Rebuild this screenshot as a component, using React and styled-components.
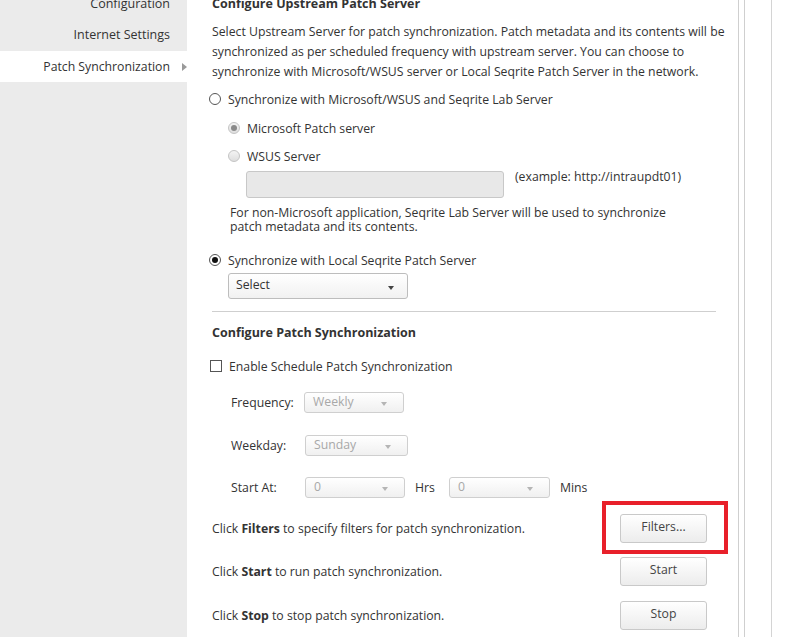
import React from 'react';
import styled, { createGlobalStyle } from 'styled-components';

const GlobalStyle = createGlobalStyle`
    html, body {
        margin: 0;
        padding: 0;
        background: #ffffff;
    }
    body {
        font-family: "Open Sans", "Liberation Sans", sans-serif;
        font-size: 12.25px;
        color: #333333;
    }
`;

const Page = styled.div`
    display: flex;
    width: 794px;
    height: 637px;
    overflow: hidden;
`;

const Sidebar = styled.div`
    width: 187px;
    flex-shrink: 0;
    background: #ebebeb;
    display: flex;
    flex-direction: column;
`;

const NavList = styled.div`
    display: flex;
    flex-direction: column;
    margin-top: -12px;
`;

const NavItem = styled.div`
    height: 31px;
    display: flex;
    align-items: center;
    justify-content: flex-end;
    padding-right: ${(p) => (p.$active ? '0' : '17px')};
    background: ${(p) => (p.$active ? '#ffffff' : 'transparent')};
    color: #333;
    font-size: ${(p) => (p.$active ? '12.25px' : '12.5px')};
    margin-top: ${(p) => (p.$active ? '1px' : '0')};
`;

const NavArrow = styled.span`
    width: 0;
    height: 0;
    border-top: 4px solid transparent;
    border-bottom: 4px solid transparent;
    border-left: 5px solid #9a9a9a;
    margin-left: 12px;
    margin-right: 0;
`;

const Main = styled.div`
    width: 552px;
    flex-shrink: 0;
    padding-left: 25px;
    box-sizing: border-box;
    border-right: 1px solid #cfcfcf;
    display: flex;
    flex-direction: column;
`;

const Gutter = styled.div`
    width: 5px;
    flex-shrink: 0;
    border-right: 1px solid #cfcfcf;
`;

const Column = styled.div`
    width: 26px;
    flex-shrink: 0;
    border-right: 1px solid #d4d4d4;
`;

const Heading = styled.div`
    font-weight: 700;
    font-size: 12.5px;
    line-height: 20px;
    height: 20px;
    margin-top: ${(p) => p.$mt}px;
    color: #333;
    white-space: nowrap;
`;

const Para = styled.div`
    line-height: ${(p) => p.$lh || 20}px;
    margin-top: ${(p) => p.$mt}px;
    margin-left: ${(p) => p.$ml || 0}px;
    width: ${(p) => p.$w || 520}px;
`;

const OptionRow = styled.label`
    display: flex;
    align-items: center;
    height: 20px;
    margin-top: ${(p) => p.$mt}px;
    margin-left: ${(p) => p.$ml}px;
    gap: ${(p) => p.$gap || 7}px;
    white-space: nowrap;
`;

const Radio = styled.span`
    width: 12px;
    height: 12px;
    box-sizing: border-box;
    border-radius: 50%;
    flex-shrink: 0;
    display: flex;
    align-items: center;
    justify-content: center;
    border: 1px solid ${(p) => (p.$disabled ? '#c4c4c4' : '#555555')};
    background: ${(p) => (p.$disabled ? 'linear-gradient(#f4f4f4, #dedede)' : '#ffffff')};

    &::after {
        content: '';
        display: ${(p) => (p.$checked ? 'block' : 'none')};
        width: 6px;
        height: 6px;
        border-radius: 50%;
        background: ${(p) => (p.$disabled ? '#8a8a8a' : '#111111')};
    }
`;

const Checkbox = styled.span`
    width: 12px;
    height: 12px;
    box-sizing: border-box;
    border: 1px solid #555555;
    background: #fff;
    flex-shrink: 0;
`;

const InputRow = styled.div`
    display: flex;
    align-items: flex-start;
    margin-top: ${(p) => p.$mt}px;
    margin-left: 34px;
    gap: 11px;
`;

const TextBox = styled.div`
    width: 258px;
    height: 27px;
    box-sizing: border-box;
    border: 1px solid #c8c8c8;
    border-radius: 3px;
    background: #e8e8e8;
`;

const Hint = styled.span`
    line-height: 14px;
    margin-top: -1px;
    white-space: nowrap;
`;

const SelectBox = styled.div`
    width: ${(p) => p.$w}px;
    height: ${(p) => p.$h || 21}px;
    box-sizing: border-box;
    border: 1px solid ${(p) => (p.$disabled ? '#cfcfcf' : '#bdbdbd')};
    border-radius: 3px;
    background: ${(p) => (p.$disabled ? 'linear-gradient(#ffffff, #f0f0f0)' : 'linear-gradient(#ffffff, #f1f1f1)')};
    display: flex;
    align-items: center;
    justify-content: space-between;
    padding: 0 ${(p) => (p.$disabled ? 16 : 13)}px 3px ${(p) => (p.$disabled ? 8 : 7)}px;
    color: ${(p) => (p.$disabled ? '#a8a8a8' : '#333333')};
    margin-top: ${(p) => p.$mt || 0}px;
    margin-left: ${(p) => p.$ml || 0}px;
    flex-shrink: 0;

    &::after {
        content: '';
        width: 0;
        height: 0;
        border-left: 3.5px solid transparent;
        border-right: 3.5px solid transparent;
        border-top: 4px solid ${(p) => (p.$disabled ? '#b5b5b5' : '#444444')};
        margin-top: 6px;
    }
`;

const Divider = styled.div`
    width: 504px;
    height: 1px;
    background: #cfcfcf;
    margin-top: ${(p) => p.$mt}px;
`;

const FieldRow = styled.div`
    display: flex;
    align-items: center;
    height: 21px;
    margin-top: ${(p) => p.$mt}px;
    margin-left: 19px;
    white-space: nowrap;
`;

const FieldLabel = styled.span`
    width: ${(p) => p.$w}px;
    flex-shrink: 0;
`;

const Unit = styled.span`
    margin-left: ${(p) => p.$ml}px;
    width: ${(p) => p.$w || 'auto'}px;
`;

const ActionRow = styled.div`
    display: flex;
    align-items: center;
    justify-content: space-between;
    width: 495px;
    height: 28px;
    margin-top: ${(p) => p.$mt}px;
    white-space: nowrap;
`;

const ButtonWrap = styled.div`
    position: relative;
`;

const Button = styled.div`
    width: 87px;
    height: 29px;
    box-sizing: border-box;
    border: 1px solid #c9c9c9;
    border-radius: 3px;
    background: linear-gradient(#ffffff, #ececec);
    display: flex;
    align-items: center;
    justify-content: center;
    padding-bottom: 3px;
    color: #444;
    font-size: 12.25px;
`;

const Highlight = styled.div`
    position: absolute;
    left: -18px;
    top: -13px;
    width: 126px;
    height: 53px;
    box-sizing: border-box;
    border: 4px solid #e8202a;
    pointer-events: none;
`;

const App = () => {
    return (
        <>
            <GlobalStyle />
            <Page>
                <Sidebar>
                    <NavList>
                        <NavItem>Configuration</NavItem>
                        <NavItem>Internet Settings</NavItem>
                        <NavItem $active>
                            Patch Synchronization
                            <NavArrow />
                        </NavItem>
                    </NavList>
                </Sidebar>

                <Main>
                    <Heading $mt={-6}>Configure Upstream Patch Server</Heading>
                    <Para $mt={8}>
                        Select Upstream Server for patch synchronization. Patch metadata and its contents will be
                        synchronized as per scheduled frequency with upstream server. You can choose to
                        synchronize with Microsoft/WSUS server or Local Seqrite Patch Server in the network.
                    </Para>

                    <OptionRow $mt={7} $ml={-3}>
                        <Radio />
                        Synchronize with Microsoft/WSUS and Seqrite Lab Server
                    </OptionRow>
                    <OptionRow $mt={9} $ml={16} $gap={7}>
                        <Radio $disabled $checked />
                        Microsoft Patch server
                    </OptionRow>
                    <OptionRow $mt={8} $ml={16} $gap={7}>
                        <Radio $disabled />
                        WSUS Server
                    </OptionRow>
                    <InputRow $mt={5}>
                        <TextBox />
                        <Hint>(example: http://intraupdt01)</Hint>
                    </InputRow>
                    <Para $mt={8} $lh={14} $ml={18} $w={445}>
                        For non-Microsoft application, Seqrite Lab Server will be used to synchronize
                        patch metadata and its contents.
                    </Para>

                    <OptionRow $mt={16} $ml={-3}>
                        <Radio $checked />
                        Synchronize with Local Seqrite Patch Server
                    </OptionRow>
                    <SelectBox $w={180} $h={26} $mt={3} $ml={16}>Select</SelectBox>

                    <Divider $mt={12} />

                    <Heading $mt={11}>Configure Patch Synchronization</Heading>
                    <OptionRow $mt={13} $ml={-2}>
                        <Checkbox />
                        Enable Schedule Patch Synchronization
                    </OptionRow>

                    <FieldRow $mt={16}>
                        <FieldLabel $w={73}>Frequency:</FieldLabel>
                        <SelectBox $disabled $w={100}>Weekly</SelectBox>
                    </FieldRow>
                    <FieldRow $mt={22}>
                        <FieldLabel $w={74}>Weekday:</FieldLabel>
                        <SelectBox $disabled $w={103}>Sunday</SelectBox>
                    </FieldRow>
                    <FieldRow $mt={21}>
                        <FieldLabel $w={74}>Start At:</FieldLabel>
                        <SelectBox $disabled $w={100}>0</SelectBox>
                        <Unit $ml={10} $w={34}>Hrs</Unit>
                        <SelectBox $disabled $w={101}>0</SelectBox>
                        <Unit $ml={10}>Mins</Unit>
                    </FieldRow>

                    <ActionRow $mt={16}>
                        <span>Click <b>Filters</b> to specify filters for patch synchronization.</span>
                        <ButtonWrap>
                            <Button>Filters...</Button>
                            <Highlight />
                        </ButtonWrap>
                    </ActionRow>
                    <ActionRow $mt={15}>
                        <span>Click <b>Start</b> to run patch synchronization.</span>
                        <Button>Start</Button>
                    </ActionRow>
                    <ActionRow $mt={16}>
                        <span>Click <b>Stop</b> to stop patch synchronization.</span>
                        <Button>Stop</Button>
                    </ActionRow>
                </Main>
                <Gutter />
                <Column />
            </Page>
        </>
    );
};

export default App;
